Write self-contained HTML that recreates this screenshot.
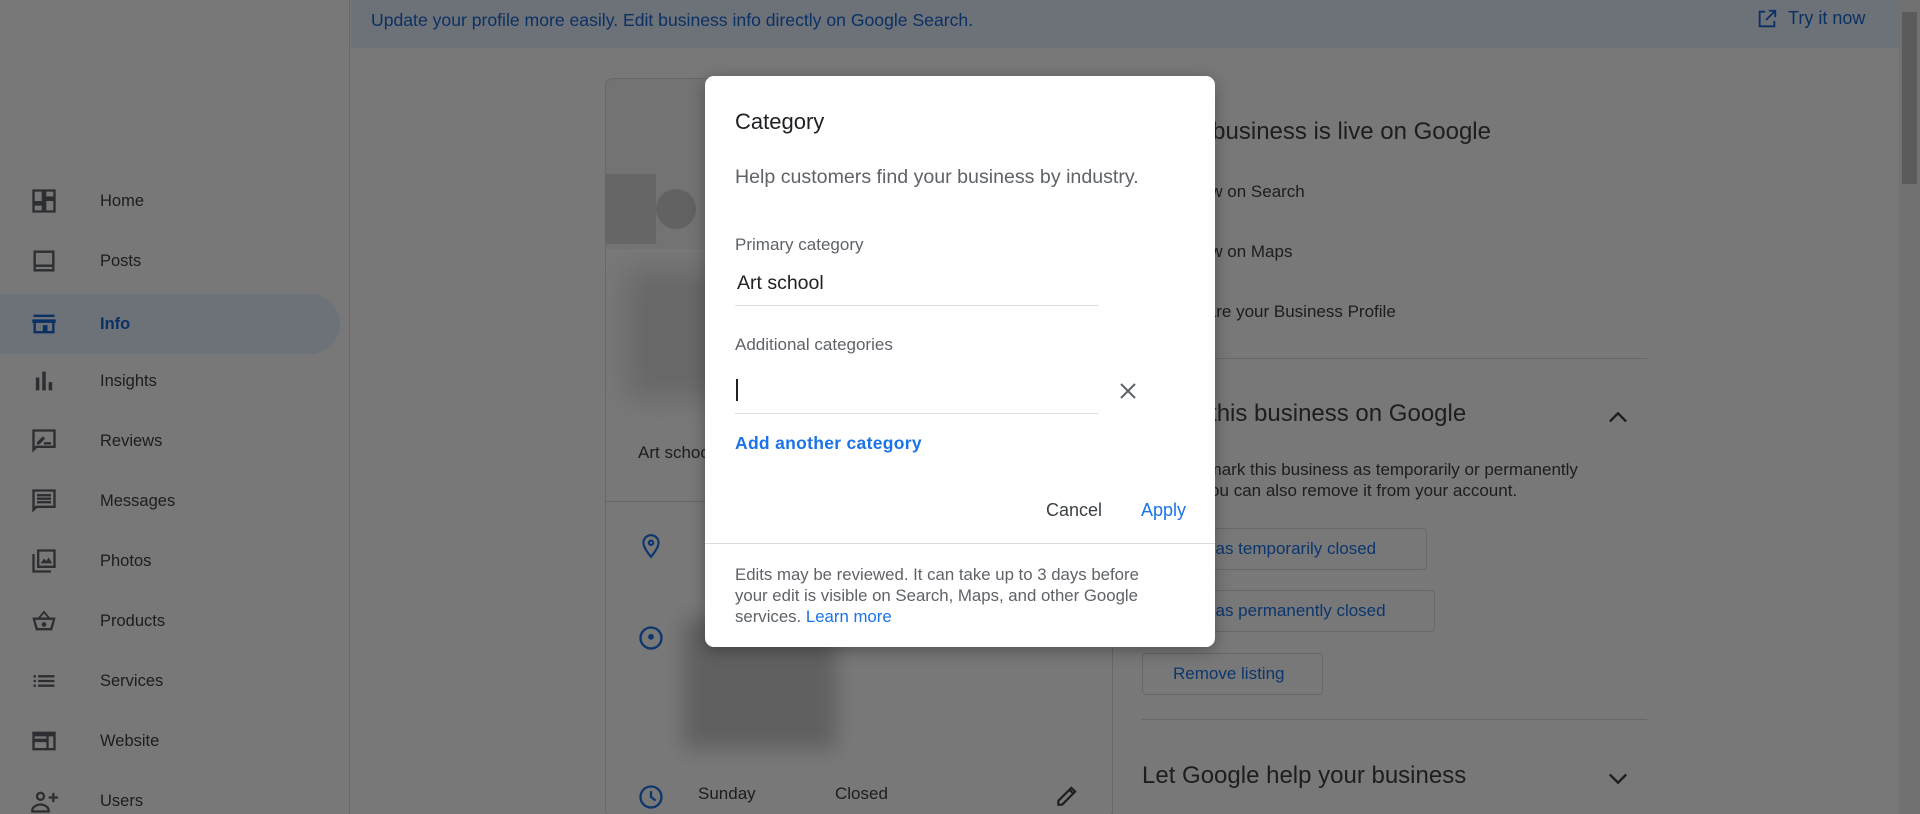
<!DOCTYPE html>
<html><head><meta charset="utf-8"><style>
*{margin:0;padding:0;box-sizing:border-box}
html,body{width:1920px;height:814px;overflow:hidden}
body{background:#fff;font-family:"Liberation Sans",Arial,sans-serif;position:relative;color:#202124}
.abs{position:absolute}
.side{left:0;top:0;width:350px;height:814px;border-right:1px solid #dadce0;background:#fff}
.nav{position:absolute;left:0;width:340px;height:60px;display:flex;align-items:center}
.nav svg{position:absolute;left:30px;width:28px;height:28px;fill:#5f6368}
.nav span{position:absolute;left:100px;font-size:16.5px;color:#3c4043}
.nav.act{background:#e8f0fe;border-radius:0 30px 30px 0}
.nav.act span{color:#1967d2;font-weight:bold}
.nav.act svg{fill:#1967d2}
.banner{left:351px;top:0;width:1549px;height:48px;background:#e8f0fe}
.scroll{left:1899px;top:0;width:21px;height:814px;background:#f1f1f1}
.thumb{left:1902px;top:12px;width:15px;height:172px;background:#c1c1c1}
.card{left:605px;top:78px;width:508px;height:740px;border:1px solid #dadce0;border-radius:8px;background:#fff;overflow:hidden}
.rt{font-size:17px;color:#3c4043}
.btn{position:absolute;left:1142px;height:42px;border:1px solid #dadce0;border-radius:4px;color:#1a73e8;font-size:17px;display:flex;align-items:center;padding-left:30px}
.hr{position:absolute;height:1px;background:#dadce0}
.ov{left:0;top:0;width:1920px;height:814px;background:rgba(0,0,0,.53)}
.dlg{left:705px;top:76px;width:510px;height:571px;background:#fff;border-radius:9px;box-shadow:0 4px 16px rgba(0,0,0,.3)}
.dlg .t{position:absolute;left:30px}
</style></head><body>
<div class="abs side">
 <div class="nav" style="top:171px"><svg viewBox="0 0 24 24"><path d="M3 3h8v10H3zM13 3h8v6h-8zM13 11h8v10h-8zM3 15h8v6H3z" fill="none" stroke="#5f6368" stroke-width="2"/></svg><span>Home</span></div>
 <div class="nav" style="top:231px"><svg viewBox="0 0 24 24"><path d="M3 3h18v18H3zM5 5v10h14V5zM5 17v2h14v-2z" fill-rule="evenodd"/></svg><span>Posts</span></div>
 <div class="nav act" style="top:294px"><svg viewBox="0 0 24 24"><path d="M3 4h18v2H3zM2 8h20v3h-1v9H3v-9H2zm3 3v7h6v-5h4v5h4v-7z" fill-rule="evenodd"/></svg><span>Info</span></div>
 <div class="nav" style="top:351px"><svg viewBox="0 0 24 24"><path d="M5 9h3v11H5zM10.5 4h3v16h-3zM16 13h3v7h-3z"/></svg><span>Insights</span></div>
 <div class="nav" style="top:411px"><svg viewBox="0 0 24 24"><path d="M2 2h20v16H6l-4 4zM4 4v13l1-1h15V4zM6 13l5-5 2 2-5 5H6zM12 13h6v2h-6z" fill-rule="evenodd"/></svg><span>Reviews</span></div>
 <div class="nav" style="top:471px"><svg viewBox="0 0 24 24"><path d="M2 2h20v16H6l-4 4zM4 4v13l1-1h15V4zM6 6h12v2H6zM6 9h12v2H6zM6 12h12v2H6z" fill-rule="evenodd"/></svg><span>Messages</span></div>
 <div class="nav" style="top:531px"><svg viewBox="0 0 24 24"><path d="M6 2h16v16H6zM8 4v12h12V4zM2 6h2v14h14v2H2zM9 14l3-4 2 2 2-3 3 5z" fill-rule="evenodd"/></svg><span>Photos</span></div>
 <div class="nav" style="top:591px"><svg viewBox="0 0 24 24"><path d="M12 3l5 6h5l-3 11H5L2 9h5zM9 9h6l-3-3.5zM4.6 11l2 7h10.8l2-7z M12 13a2 2 0 1 1 0 4a2 2 0 1 1 0-4" fill-rule="evenodd"/></svg><span>Products</span></div>
 <div class="nav" style="top:651px"><svg viewBox="0 0 24 24"><path d="M3 7h2v2H3zM7 7h14v2H7zM3 11h2v2H3zM7 11h14v2H7zM3 15h2v2H3zM7 15h14v2H7z"/></svg><span>Services</span></div>
 <div class="nav" style="top:711px"><svg viewBox="0 0 24 24"><path d="M2 4h20v16H2zM4 8v10h10v-5H4zm12 0v10h4V8zM4 10h10V8H4z" fill-rule="evenodd"/></svg><span>Website</span></div>
 <div class="nav" style="top:771px"><svg viewBox="0 0 24 24"><path d="M9 4a4 4 0 1 1 0 8a4 4 0 1 1 0-8zm0 2a2 2 0 1 0 0 4a2 2 0 1 0 0-4zM1 20c0-4 5-6 8-6s8 2 8 6v2H1zm2 0h12c0-2-3-4-6-4s-6 2-6 4zM19 5h2v3h3v2h-3v3h-2v-3h-3V8h3z" fill-rule="evenodd"/></svg><span>Users</span></div>
</div>
<div class="abs banner"><div class="abs" style="left:20px;top:10px;font-size:17.6px;color:#1967d2">Update your profile more easily. Edit business info directly on Google Search.</div>
 <svg class="abs" style="left:1405px;top:8px" width="22" height="22" viewBox="0 0 24 24"><path d="M10 4H4v16h16v-6M14 3h7v7M21 3l-10 10" fill="none" stroke="#1967d2" stroke-width="2"/></svg>
 <div class="abs" style="left:1437px;top:8px;font-size:18px;color:#1967d2">Try it now</div></div>
<div class="abs card">
 <div class="abs" style="left:0;top:0;width:508px;height:170px;background:#f5f5f5"></div>
 <div class="abs" style="left:0;top:95px;width:50px;height:70px;background:#d8d8d8"></div>
 <div class="abs" style="left:50px;top:110px;width:40px;height:40px;border-radius:50%;background:#d0d0d0"></div>
 <div class="abs" style="left:20px;top:190px;width:150px;height:130px;background:#ddd;filter:blur(14px)"></div>
 <div class="abs rt" style="left:32px;top:364px">Art school</div>
 <div class="hr" style="left:0;top:422px;width:508px"></div>
 <svg class="abs" style="left:32px;top:454px" width="26" height="26" viewBox="0 0 24 24"><path d="M12 2a7 7 0 0 1 7 7c0 5-7 13-7 13S5 14 5 9a7 7 0 0 1 7-7zm0 5a2 2 0 1 0 0 4a2 2 0 1 0 0-4z" fill="none" stroke="#1a73e8" stroke-width="2"/></svg>
 <svg class="abs" style="left:31px;top:545px" width="28" height="28" viewBox="0 0 24 24"><circle cx="12" cy="12" r="9" fill="none" stroke="#1a73e8" stroke-width="2"/><circle cx="12" cy="11" r="2.5" fill="#1a73e8"/></svg>
 <div class="abs" style="left:77px;top:540px;width:153px;height:130px;background:#ccc;filter:blur(10px)"></div>
 <svg class="abs" style="left:31px;top:704px" width="28" height="28" viewBox="0 0 24 24"><circle cx="12" cy="12" r="9" fill="none" stroke="#1a73e8" stroke-width="2"/><path d="M12 7v5l4 3" fill="none" stroke="#1a73e8" stroke-width="2"/></svg>
 <div class="abs rt" style="left:92px;top:705px">Sunday</div>
 <div class="abs rt" style="left:229px;top:705px">Closed</div>
 <svg class="abs" style="left:448px;top:704px" width="26" height="26" viewBox="0 0 24 24"><path d="M4 20v-3.5L16 4.5l3.5 3.5L7.5 20zM14.5 6.5l3 3" fill="none" stroke="#3c4043" stroke-width="2"/></svg>
</div>
<div class="hr" style="left:1112px;top:78px;width:1px;height:736px"></div>
<div class="abs" style="left:1157px;top:118px;font-size:24px;color:#3c4043">Your business is live on Google</div>
<div class="abs rt" style="left:1186px;top:182px">View on Search</div>
<div class="abs rt" style="left:1186px;top:242px">View on Maps</div>
<div class="abs rt" style="left:1186px;top:302px">Share your Business Profile</div>
<div class="hr" style="left:1142px;top:358px;width:505px"></div>
<div class="abs" style="left:1142px;top:400px;font-size:24px;color:#3c4043">Close this business on Google</div>
<svg class="abs" style="left:1604px;top:404px" width="28" height="28" viewBox="0 0 24 24"><path d="M5 15l7-7 7 7" fill="none" stroke="#3c4043" stroke-width="2"/></svg>
<div class="abs" style="left:1142px;top:459px;font-size:17px;color:#3c4043;line-height:21px;width:470px">You can mark this business as temporarily or permanently closed. You can also remove it from your account.</div>
<div class="btn" style="top:528px;width:285px">Mark as temporarily closed</div>
<div class="btn" style="top:590px;width:293px">Mark as permanently closed</div>
<div class="btn" style="top:653px;width:181px">Remove listing</div>
<div class="hr" style="left:1142px;top:719px;width:505px"></div>
<div class="abs" style="left:1142px;top:762px;font-size:24px;color:#3c4043">Let Google help your business</div>
<svg class="abs" style="left:1604px;top:764px" width="28" height="28" viewBox="0 0 24 24"><path d="M5 9l7 7 7-7" fill="none" stroke="#3c4043" stroke-width="2"/></svg>
<div class="abs scroll"></div><div class="abs thumb"></div>
<div class="abs ov"></div>
<div class="abs dlg">
 <div class="t" style="top:33px;font-size:22px;color:#202124">Category</div>
 <div class="t" style="top:90px;font-size:19.6px;color:#5f6368">Help customers find your business by industry.</div>
 <div class="t" style="top:159px;font-size:17px;color:#5f6368">Primary category</div>
 <div class="t" style="top:196px;font-size:19.5px;color:#202124;left:32px">Art school</div>
 <div class="hr" style="left:30px;top:229px;width:363px"></div>
 <div class="t" style="top:259px;font-size:17px;color:#5f6368">Additional categories</div>
 <div class="abs" style="left:31px;top:303px;width:2px;height:22px;background:#202124"></div>
 <div class="hr" style="left:30px;top:337px;width:363px"></div>
 <svg class="abs" style="left:411px;top:303px" width="24" height="24" viewBox="0 0 24 24"><path d="M5 5l14 14M19 5L5 19" stroke="#5f6368" stroke-width="2"/></svg>
 <div class="t" style="top:357px;font-size:17.5px;color:#1a73e8;font-weight:bold;letter-spacing:.3px">Add another category</div>
 <div class="abs" style="left:341px;top:424px;font-size:18px;color:#3c4043">Cancel</div>
 <div class="abs" style="left:436px;top:424px;font-size:18px;color:#1a73e8">Apply</div>
 <div class="hr" style="left:0;top:467px;width:510px"></div>
 <div class="t" style="top:488px;font-size:16.8px;color:#5f6368;line-height:21px;width:425px">Edits may be reviewed. It can take up to 3 days before your edit is visible on Search, Maps, and other Google services. <span style="color:#1a73e8">Learn more</span></div>
</div>
</body></html>
